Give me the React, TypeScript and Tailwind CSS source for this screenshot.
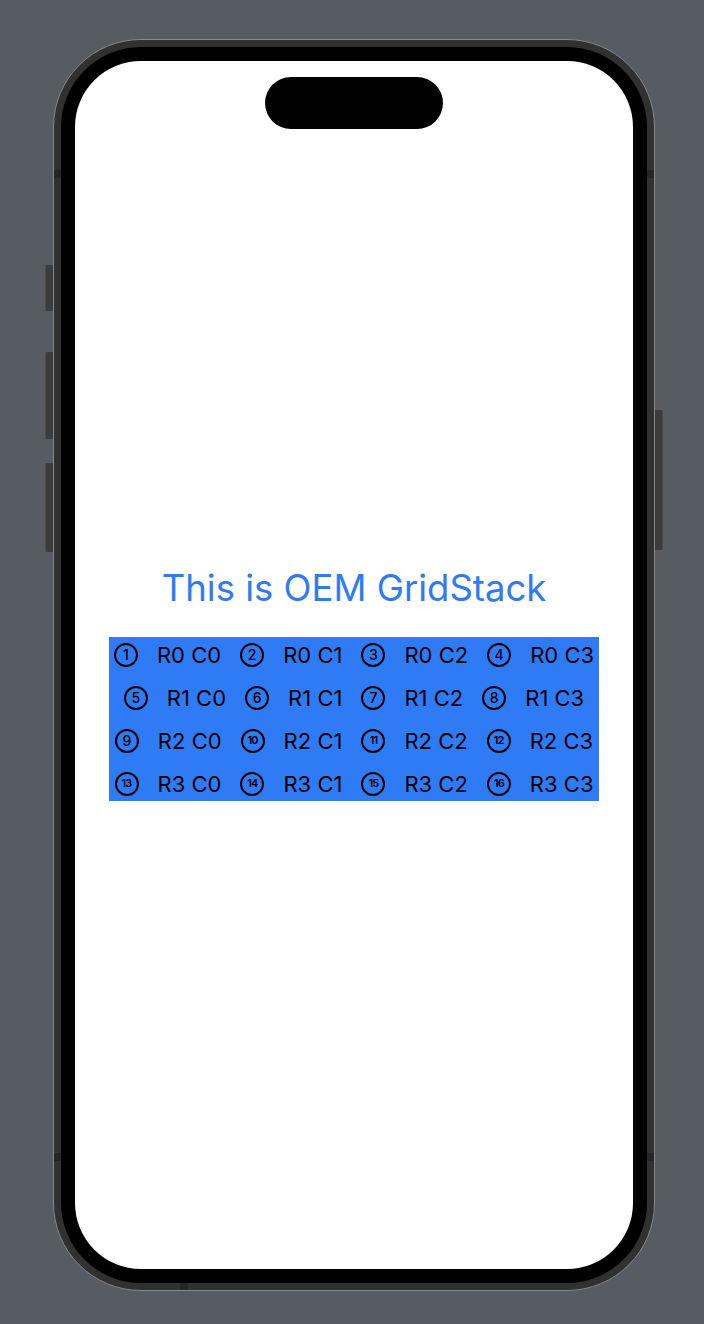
import React from "react";

const font = { fontFamily: "Inter, 'Noto Sans', sans-serif" };

function Circled({ n }: { n: number }) {
  const two = n >= 10;
  return (
    <span className="flex h-[24px] w-[24px] shrink-0 items-center justify-center rounded-full border-2 border-black text-black">
      <span
        className={
          two
            ? "text-[11px] font-semibold leading-none tracking-[-0.08em]"
            : "text-[14px] font-medium leading-none"
        }
      >
        {n}
      </span>
    </span>
  );
}

export default function App() {
  const rows = [0, 1, 2, 3];
  const cols = [0, 1, 2, 3];
  return (
    <div className="flex min-h-[1324px] w-full bg-[#575b62] pl-[53px]" style={font}>
      <div className="relative mt-[39px] h-[1252px] w-[602px]">
        {/* side buttons */}
        <div className="absolute left-[-8px] top-[226px] h-[46px] w-[8px] rounded-l-[2px] border-l border-[#4a4b4d] bg-[#3a3b3d]" />
        <div className="absolute left-[-8px] top-[313px] h-[87px] w-[8px] rounded-l-[2px] border-l border-[#4a4b4d] bg-[#3a3b3d]" />
        <div className="absolute left-[-8px] top-[424px] h-[89px] w-[8px] rounded-l-[2px] border-l border-[#4a4b4d] bg-[#3a3b3d]" />
        <div className="absolute right-[-8px] top-[371px] h-[140px] w-[8px] rounded-r-[2px] border-r border-[#4a4b4d] bg-[#3a3b3d]" />

        <div className="h-full w-full rounded-[88px] border border-[#85878a] bg-[#313132] p-[7px]">
          <div className="h-full w-full rounded-[80px] bg-black p-[14px]">
            <div className="flex h-full w-full flex-col items-center rounded-[66px] bg-white">
              {/* dynamic island */}
              <div className="mt-[16px] h-[52px] w-[178px] rounded-full bg-black" />

              <div className="mt-[436px] flex flex-col items-center">
                <div className="text-[36.5px] leading-[46px] text-[#2f7bf6]">This is OEM GridStack</div>
                <div className="mt-[26px] flex w-[490px] flex-col gap-[8px] bg-[#2f7bf6]">
                  {rows.map((r) => (
                    <div key={r} className="flex h-[35px] items-center justify-center gap-[19px]">
                      {cols.map((c) => (
                        <React.Fragment key={c}>
                          <Circled n={r * 4 + c + 1} />
                          <span className="text-[22px] leading-none text-black">
                            R{r} C{c}
                          </span>
                        </React.Fragment>
                      ))}
                    </div>
                  ))}
                </div>
              </div>
            </div>
          </div>
        </div>

        {/* antenna bands */}
        <div className="absolute left-[1px] top-[131px] h-[8px] w-[7px] bg-[#262627]" />
        <div className="absolute right-[1px] top-[131px] h-[8px] w-[7px] bg-[#262627]" />
        <div className="absolute left-[1px] top-[1114px] h-[8px] w-[7px] bg-[#262627]" />
        <div className="absolute right-[1px] top-[1114px] h-[8px] w-[7px] bg-[#262627]" />
        <div className="absolute bottom-[1px] left-[127px] h-[7px] w-[8px] bg-[#262627]" />
      </div>
    </div>
  );
}
